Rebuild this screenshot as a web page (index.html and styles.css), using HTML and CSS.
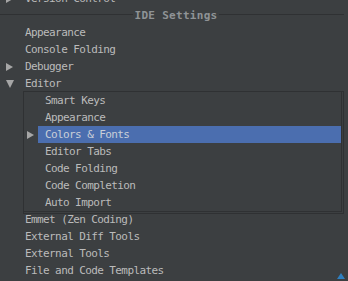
FILE: index.html
```html
<!DOCTYPE html>
<html lang="en">
<head>
    <meta charset="UTF-8">
    <title>Settings</title>
    <link rel="stylesheet" href="styles.css">
</head>
<body>
    <div class="tree">
        <div class="row top-cut"><span class="arrow right"></span><span class="label">Version Control</span></div>
        <div class="section"><span>IDE Settings</span></div>
        <div class="row"><span class="arrow"></span><span class="label">Appearance</span></div>
        <div class="row"><span class="arrow"></span><span class="label">Console Folding</span></div>
        <div class="row"><span class="arrow right"></span><span class="label">Debugger</span></div>
        <div class="row"><span class="arrow down"></span><span class="label">Editor</span></div>

        <div class="panel">
            <div class="row sub"><span class="arrow"></span><span class="label">Smart Keys</span></div>
            <div class="row sub"><span class="arrow"></span><span class="label">Appearance</span></div>
            <div class="row sub selected"><span class="arrow right"></span><span class="label">Colors &amp; Fonts</span></div>
            <div class="row sub"><span class="arrow"></span><span class="label">Editor Tabs</span></div>
            <div class="row sub"><span class="arrow"></span><span class="label">Code Folding</span></div>
            <div class="row sub"><span class="arrow"></span><span class="label">Code Completion</span></div>
            <div class="row sub"><span class="arrow"></span><span class="label">Auto Import</span></div>
        </div>

        <div class="row"><span class="arrow"></span><span class="label">Emmet (Zen Coding)</span></div>
        <div class="row"><span class="arrow"></span><span class="label">External Diff Tools</span></div>
        <div class="row"><span class="arrow"></span><span class="label">External Tools</span></div>
        <div class="row"><span class="arrow"></span><span class="label">File and Code Templates</span></div>
    </div>
    <div class="grip"></div>
</body>
</html>
```

FILE: styles.css
```css
body {
    margin: 0;
    background-color: #3c3f41;
    color: #bbbbbb;
    font-family: "DejaVu Sans Mono", "Liberation Mono", monospace;
    font-size: 11px;
    letter-spacing: -0.6px;
    overflow: hidden;
    height: 281px;
    position: relative;
}
.tree {
    margin-top: -10px;
    padding-right: 4px;
}
.row {
    display: flex;
    align-items: stretch;
    height: 17px;
    padding-left: 6px;
}
.row .arrow {
    width: 19px;
    display: flex;
    align-items: center;
}
.row .label {
    flex: 1;
    display: flex;
    align-items: center;
    white-space: nowrap;
}
.arrow.right::before {
    content: "";
    border-left: 7px solid #a6a6a6;
    border-top: 4.5px solid transparent;
    border-bottom: 4.5px solid transparent;
}
.arrow.down::before {
    content: "";
    border-top: 8px solid #a6a6a6;
    border-left: 4px solid transparent;
    border-right: 4px solid transparent;
}
.section {
    height: 17px;
    display: flex;
    align-items: center;
    justify-content: center;
    background: linear-gradient(#2f3133, #2f3133) no-repeat 0 7px / 100% 1px;
    color: #8f9396;
    font-weight: bold;
    letter-spacing: 0.3px;
    padding-left: 8px;
}
.section span {
    background-color: #3c3f41;
    padding: 0 1px;
}
.panel {
    margin: -1px 0 -3px 23px;
    border: 1px solid #2f3133;
    border-right: 3px double #2f3133;
    border-bottom: 3px double #2f3133;
}
.row.sub {
    padding-left: 3px;
}
.row.sub .arrow {
    width: 11px;
}
.row.sub .label {
    padding-left: 7px;
}
.row.selected .label {
    background-color: #4b6eaf;
    color: #c9cfd8;
}
.grip {
    position: absolute;
    right: 3px;
    bottom: 2px;
    width: 0;
    height: 0;
    border-bottom: 6px solid #2f7fbf;
    border-left: 4px solid transparent;
    border-right: 4px solid transparent;
}
```
